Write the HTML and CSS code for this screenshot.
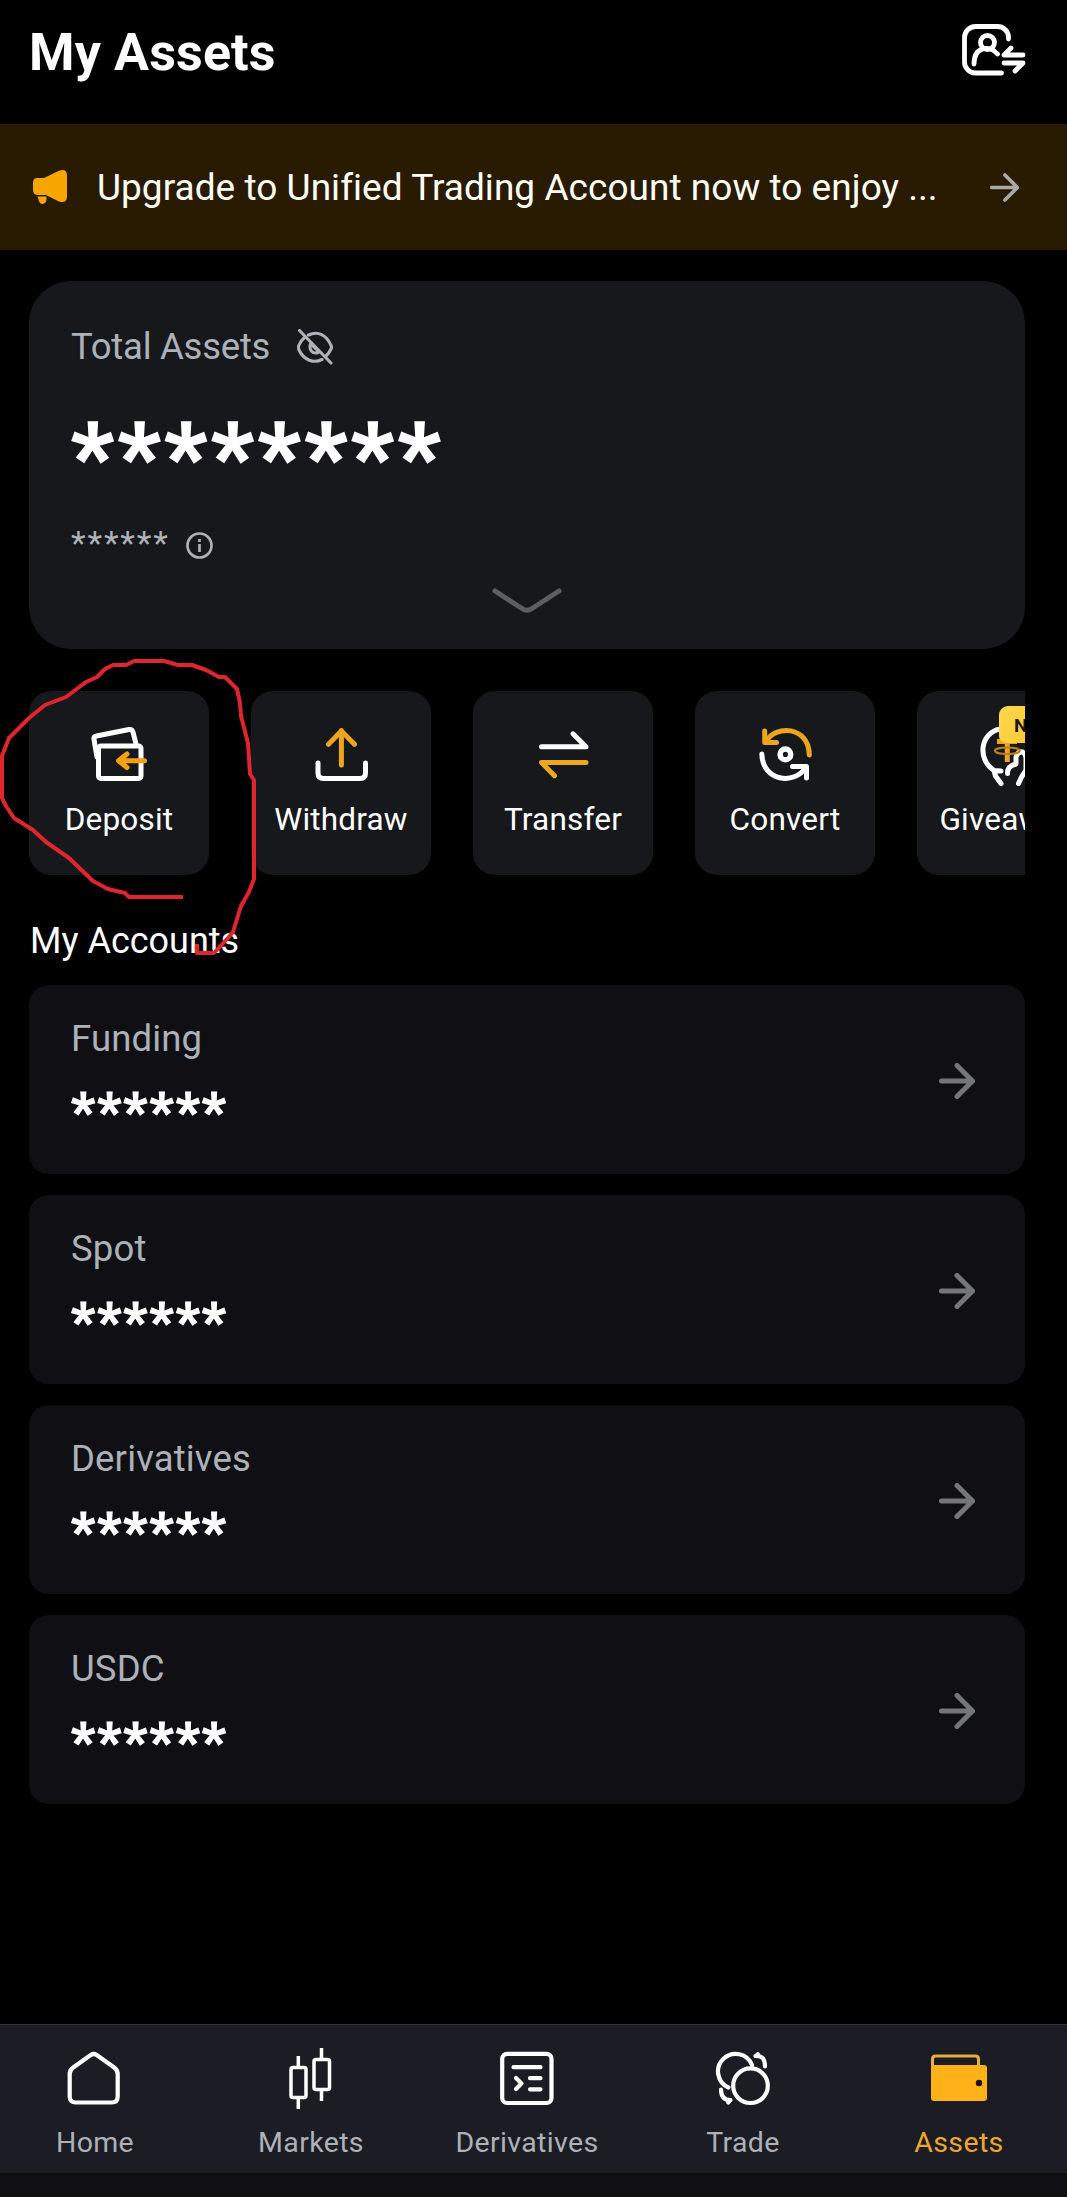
FILE: index.html
```html
<!DOCTYPE html>
<html lang="en">
<head>
<meta charset="utf-8">
<title>My Assets</title>
<link rel="stylesheet" href="styles.css">
</head>
<body>
<div class="app">
  <header class="header">
    <h1 class="title">My Assets</h1>
    <svg class="switch-icon" viewBox="0 0 66 56" fill="none" stroke="#fff" stroke-width="4.8" stroke-linecap="round" stroke-linejoin="round">
      <path d="M46.500 17V14.500A11 11 0 0 0 35.500 4.500H13.500A11 11 0 0 0 2.500 15.500V40A11 11 0 0 0 13.500 51H39.500"/>
      <circle cx="25.500" cy="20.500" r="7"/>
      <path d="M12 42C12 24 28 23 35.500 32M49 26L42 33H61M42 41H61L53 49"/>
    </svg>
  </header>

  <section class="banner">
    <svg class="horn" viewBox="0 0 34 34" fill="#f7a600">
      <path d="M0 12.500Q0 8 4.500 8H11L26 .8Q34-2 34 6V26Q34 34 26 31.500L13 25H5Q0 25 0 20ZM4.500 26.500H13.500V30Q12.500 34 9 34Q6.500 33.500 6 31Z"/>
    </svg>
    <p class="banner-text">Upgrade to Unified Trading Account now to enjoy ...</p>
    <svg class="banner-arrow" viewBox="0 0 36 36" fill="none" stroke="#aaa9a7" stroke-width="4.500" stroke-linecap="round" stroke-linejoin="round"><path d="M2 18H34M18.500 2.500L34 18L18.500 33.500"/></svg>
  </section>

  <main class="content">
    <section class="total">
      <div class="total-head">
        <span class="label total-label">Total Assets</span>
        <svg class="eye" viewBox="0 0 36 36" fill="none" stroke="#adb1b8" stroke-width="3.100" stroke-linecap="round" stroke-linejoin="round">
          <path d="M11.500 6C21 1.500 29.500 6 34 16.500Q35 18 34 20Q32 24.500 28.500 27.500M7 9Q3.500 12 1.800 16.500Q1 18.500 2 21C7 31.500 17 34.500 25 30.500M13.500 15C11.500 21 16 25.500 21 23.500M16 17L21 22M2.500 1.500L34 34"/>
        </svg>
      </div>
      <div class="total-value">********</div>
      <div class="total-sub">
        <span class="sub-stars">******</span>
        <svg class="info" viewBox="0 0 27 27" fill="none" stroke="#adb1b8" stroke-width="2.700"><circle cx="13.500" cy="13.500" r="12"/><path d="M13.500 12V20M13.500 7V10"/></svg>
      </div>
      <svg class="chevron" viewBox="0 0 70 26" fill="none" stroke="#5c5e62" stroke-width="5" stroke-linecap="round" stroke-linejoin="round"><path d="M3 3L30 20.500Q35 24 40 20.500L67 3"/></svg>
    </section>

    <section class="actions">
      <div class="action">
        <svg class="action-icon" viewBox="0 0 60 60" fill="none" stroke="#fff" stroke-width="5" stroke-linecap="round" stroke-linejoin="round">
          <path d="M8 33L5 15.500Q4.500 12.500 7.500 12L40 5.500Q43 5 44 8L47 20"/>
          <rect x="9.500" y="22" width="42.500" height="32.500" rx="2.500"/>
          <path stroke="#f2a20c" d="M55.500 36.700H31M38 30L29.500 36.700L38 43.500"/>
        </svg>
        <span class="action-label">Deposit</span>
      </div>
      <div class="action">
        <svg class="action-icon" viewBox="0 0 60 60" fill="none" stroke="#fff" stroke-width="5" stroke-linecap="round" stroke-linejoin="round">
          <path d="M7 39V49Q7 54.500 12.500 54.500H49Q54.500 54.500 54.500 49V39"/>
          <path stroke="#eea51e" d="M30.400 41V6.500M17.500 20.300L30.400 7L43.500 20.300"/>
        </svg>
        <span class="action-label">Withdraw</span>
      </div>
      <div class="action">
        <svg class="action-icon" viewBox="0 0 60 60" fill="none" stroke="#fff" stroke-width="5" stroke-linecap="round" stroke-linejoin="round">
          <path d="M8.500 22.700H53L40 9.800"/>
          <path stroke="#eca81f" d="M53 38.500H8.500L21.500 51.700"/>
        </svg>
        <span class="action-label">Transfer</span>
      </div>
      <div class="action">
        <svg class="action-icon" viewBox="0 0 60 60" fill="none" stroke="#fff" stroke-width="5" stroke-linecap="round" stroke-linejoin="round">
          <path stroke="#eca51c" d="M9.700 7V18.500H21.500M10.500 18C20.500 0 54 2 54.300 31"/>
          <path d="M6.800 30C7.300 57 39.500 62 51 43M37.500 42.500H51.500V54"/>
          <circle cx="30.400" cy="30.400" r="5.300" stroke-width="5.500"/>
        </svg>
        <span class="action-label">Convert</span>
      </div>
      <div class="action">
        <div class="gift">
          <svg class="action-icon" viewBox="0 0 60 60" fill="none" stroke="#fff" stroke-width="5" stroke-linecap="round" stroke-linejoin="round">
            <path d="M23 5C3 9 0 35 17 46.500L24 47M17 46.500L18.500 52L24 59.500"/>
            <path d="M30.500 49.500Q30 42 39 40V33Q41 27 45.500 28Q49 30 49 34V46L44.500 53L41.500 59.500"/>
            <path stroke="#eca51c" stroke-linecap="butt" d="M20 17.500H40M30.300 17V38"/>
            <ellipse cx="30.300" cy="26.700" rx="12.500" ry="3.200" stroke="#b98018" stroke-width="2"/>
          </svg>
          <span class="badge">NEW</span>
        </div>
        <span class="action-label">Giveaway</span>
      </div>
    </section>

    <h2 class="section-title">My Accounts</h2>

    <section class="accounts">
      <div class="account">
        <div><div class="label">Funding</div><div class="stars">******</div></div>
        <svg class="arrow" viewBox="0 0 36 36"><path d="M2.500 18H33.500M18 2.500L33.500 18L18 33.500"/></svg>
      </div>
      <div class="account">
        <div><div class="label">Spot</div><div class="stars">******</div></div>
        <svg class="arrow" viewBox="0 0 36 36"><path d="M2.500 18H33.500M18 2.500L33.500 18L18 33.500"/></svg>
      </div>
      <div class="account">
        <div><div class="label">Derivatives</div><div class="stars">******</div></div>
        <svg class="arrow" viewBox="0 0 36 36"><path d="M2.500 18H33.500M18 2.500L33.500 18L18 33.500"/></svg>
      </div>
      <div class="account">
        <div><div class="label">USDC</div><div class="stars">******</div></div>
        <svg class="arrow" viewBox="0 0 36 36"><path d="M2.500 18H33.500M18 2.500L33.500 18L18 33.500"/></svg>
      </div>
    </section>
  </main>

  <nav class="nav">
    <div class="nav-item">
      <svg class="nav-icon" viewBox="0 0 64 64" fill="none" stroke="#fff" stroke-width="4.200" stroke-linejoin="round"><path d="M27.700 7Q30.700 5 33.700 7L51.200 19.500Q54.700 22 54.700 26V48.500Q54.700 54.500 48.700 54.500H12.700Q6.700 54.500 6.700 48.500V26Q6.700 22 10.200 19.500Z"/></svg>
      <span>Home</span>
    </div>
    <div class="nav-item">
      <svg class="nav-icon" viewBox="0 0 64 64" fill="none" stroke="#fff" stroke-width="3.500"><rect x="12" y="19.500" width="15" height="30" rx="2"/><rect x="35" y="11.500" width="15.500" height="30" rx="2"/><path d="M19.300 8V19.500M19.300 49.500V61M42.500 0V11.500M42.500 41.500V53"/></svg>
      <span>Markets</span>
    </div>
    <div class="nav-item">
      <svg class="nav-icon" viewBox="0 0 64 64" fill="none" stroke="#fff" stroke-width="4.200" stroke-linecap="round" stroke-linejoin="round"><rect x="7.200" y="5.800" width="49.300" height="49.200" rx="5"/><path d="M18.500 19.200H45.500M21 30L26.500 35.500L21 41M35 30.200H45.500M35 41.300H45.500"/></svg>
      <span>Derivatives</span>
    </div>
    <div class="nav-item">
      <svg class="nav-icon" viewBox="0 0 64 64" fill="none" stroke="#fff" stroke-width="4.200" stroke-linecap="round" stroke-linejoin="round"><circle cx="39.500" cy="37.700" r="17.300"/><path d="M17.400 39.500A17.600 17.600 0 1 1 41 17M44.500 8Q54 7 54 18.500M45 8L46.800 6.200M10 41.500Q10 52 19.500 52.200M17.300 54.500L19 52.500"/></svg>
      <span>Trade</span>
    </div>
    <div class="nav-item active">
      <svg class="nav-icon" viewBox="0 0 64 64"><path d="M5.500 19V11Q5.500 8 8.500 8H48.500Q51.500 8 51.500 11V19" fill="none" stroke="#e9ae3c" stroke-width="3"/><rect x="4" y="17" width="56" height="36" rx="3" fill="#ffb11a"/><circle cx="52" cy="35" r="3.200" fill="#1c160b"/></svg>
      <span>Assets</span>
    </div>
  </nav>

  <svg class="ink" viewBox="0 0 260 320" fill="none" stroke="#df252d" stroke-width="4" stroke-linejoin="round"><path d="M183 247H129L125 243L108 239L93 231L69 208L46 192L33 180L14 168L6 156L2 148V106L9 88L29 68L45 55L66 47L86 32L97 27L105 19L113 15H126L134 11H164L178 15H192L206 20L219 27H225L237 39L240 53L241 66L248 93L250 124L254 130V229L249 242L241 256L233 282L228 288L214 303H197V294"/></svg>
</div>
</body>
</html>
```
FILE: styles.css
```css
* { box-sizing: border-box; }
body { margin: 0; background: #000; color: #fff; font-family: Roboto, "Liberation Sans", sans-serif; }
h1, h2, p { margin: 0; font-weight: 400; }
svg { display: block; flex: none; }

.app { position: relative; width: 1067px; height: 2197px; overflow: hidden; display: flex; flex-direction: column; }

.header { height: 124px; padding: 21px 39px 0 29px; display: flex; justify-content: space-between; align-items: flex-start; }
.title { font-size: 52px; line-height: 64px; font-weight: 700; letter-spacing: .15px; }
.switch-icon { width: 66px; height: 56px; margin-top: 1px; }

.banner { height: 126px; padding: 0 48px 0 33px; background: #281b01; display: flex; align-items: center; }
.horn { width: 34px; height: 34px; }
.banner-text { margin-left: 30px; flex: 1; font-size: 37px; letter-spacing: .04px; color: #fffef6; white-space: nowrap; }
.banner-arrow { width: 29px; height: 29px; }

.content { flex: 1; padding: 31px 42px 0 29px; }
.label { font-size: 36.500px; line-height: 44px; letter-spacing: .15px; color: #adb1b8; }

.total { height: 368px; border-radius: 42px; background: #17181c; padding: 44px 42px 0; display: flex; flex-direction: column; }
.total-head { display: flex; align-items: center; gap: 27px; }
.total-label { letter-spacing: -.25px; }
.eye { width: 36px; height: 36px; }
.total-value { height: 100px; margin-top: 38px; font-size: 94px; line-height: 100px; font-weight: 700; letter-spacing: 4px; -webkit-text-stroke: 1.500px #fff; }
.total-sub { height: 40px; margin-top: 18px; display: flex; align-items: center; gap: 16px; color: #adb1b8; }
.sub-stars { padding-bottom: 5px; font-size: 34px; line-height: 40px; letter-spacing: 1.800px; }
.info { width: 27px; height: 27px; }
.chevron { width: 70px; height: 26px; margin: 23px auto 0; }

.actions { margin-top: 42px; display: grid; grid-template-columns: repeat(5, 180px); gap: 42px; overflow: hidden; }
.action { height: 184px; padding-top: 33px; border-radius: 22px; background: #17181c; display: flex; flex-direction: column; align-items: center; }
.action-icon { width: 60px; height: 60px; overflow: visible; }
.action-label { margin-top: 16px; font-size: 31.500px; line-height: 40px; letter-spacing: .2px; }
.gift { position: relative; }
.badge { position: absolute; left: 22px; top: -18px; width: 86px; height: 37px; padding-left: 15px; border-radius: 9px 9px 9px 7px; background: linear-gradient(135deg, #ffd84d, #fdbd22); color: #17181c; font-size: 19px; line-height: 40px; font-weight: 700; }

.section-title { margin-top: 42px; padding-left: 1px; font-size: 36px; line-height: 48px; }
.accounts { margin-top: 20px; display: grid; gap: 21px; }
.account { height: 189px; padding: 0 50px 0 42px; border-radius: 20px; background: #101014; display: flex; align-items: center; justify-content: space-between; }
.stars { height: 60px; margin-top: 21px; font-size: 53px; line-height: 60px; font-weight: 700; letter-spacing: 2.100px; -webkit-text-stroke: 1px #fff; }
.arrow { width: 36px; height: 36px; margin-top: 3px; fill: none; stroke: #75767a; stroke-width: 5; stroke-linecap: round; stroke-linejoin: round; }

.nav { height: 173px; width: 1080px; margin-left: -13px; flex: none; border-top: 1px solid #303038; border-bottom: 24px solid #101014; background: #1c1c24; display: grid; grid-template-columns: repeat(5, 216px); }
.nav-item { padding-top: 23px; display: flex; flex-direction: column; align-items: center; font-size: 28.500px; line-height: 36px; letter-spacing: .35px; color: #adb1b8; }
.nav-icon { width: 64px; height: 64px; margin-bottom: 13px; }
.active { color: #eda82c; }

.ink { position: absolute; left: 0; top: 650px; width: 260px; height: 320px; }
```
